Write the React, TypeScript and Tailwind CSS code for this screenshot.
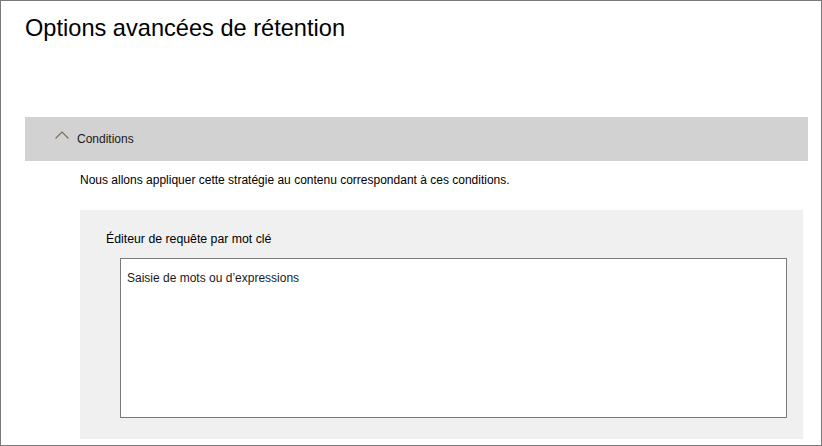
import React from "react";

export default function App() {
  return (
    <div
      className="w-[822px] h-[446px] border border-[#7a7a7a] bg-white flex flex-col overflow-hidden"
      style={{ fontFamily: '"Liberation Sans", Arial, sans-serif' }}
    >
      <h1 className="pl-[24px] pt-[13px] text-[23.6px] leading-[28px] text-black font-normal">
        Options avancées de rétention
      </h1>
      <div className="mt-[75px] ml-[24px] mr-[13px] h-[44px] bg-[#d2d2d2] flex items-center">
        <svg width="14" height="8" viewBox="0 0 14 8" className="ml-[30px] mt-[-9px]">
          <path d="M0.5 7.5 L7 1 L13.5 7.5" fill="none" stroke="#7d6a55" strokeWidth="1.1" />
        </svg>
        <span className="ml-[8px] text-[12px] leading-[44px] text-[#1a1a1a]">Conditions</span>
      </div>
      <p className="mt-[11px] ml-[79px] text-[12px] leading-[16px] text-black">
        Nous allons appliquer cette stratégie au contenu correspondant à ces conditions.
      </p>
      <div className="mt-[22px] ml-[79px] mr-[18px] bg-[#f0f0f0] pt-[21px] pl-[26px] pr-[16px] pb-[21px]">
        <div className="text-[12.3px] leading-[16px] text-black">Éditeur de requête par mot clé</div>
        <div className="mt-[11px] ml-[14px] h-[160px] border border-[#7a7a7a] bg-white pl-[6px] pt-[6px]">
          <span className="text-[12px] leading-[16px] text-[#1a1a1a]">Saisie de mots ou d’expressions</span>
        </div>
      </div>
    </div>
  );
}
